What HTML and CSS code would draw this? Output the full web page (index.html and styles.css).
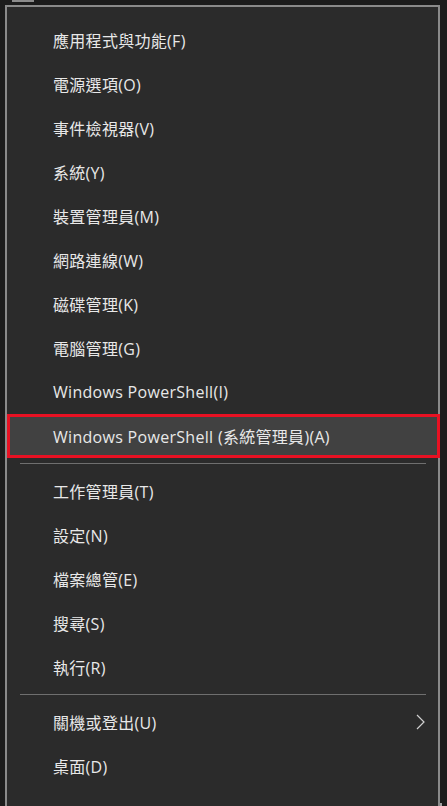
FILE: index.html
```html
<!DOCTYPE html>
<html lang="zh-Hant">
<head>
    <meta charset="UTF-8">
    <meta name="viewport" content="width=device-width, initial-scale=1.0">
    <title>Win+X</title>
    <link rel="stylesheet" href="styles.css">
</head>
<body>
    <div class="desk-bit bit-top"></div>
    <div class="desk-bit bit-blue"></div>
    <div class="desk-bit bit-grey"></div>
    <div class="desk-bit bit-logo"></div>
    <div class="desk-bit bit-right"></div>
    <div class="menu">
        <div class="item">應用程式與功能(F)</div>
        <div class="item">電源選項(O)</div>
        <div class="item">事件檢視器(V)</div>
        <div class="item">系統(Y)</div>
        <div class="item">裝置管理員(M)</div>
        <div class="item">網路連線(W)</div>
        <div class="item">磁碟管理(K)</div>
        <div class="item">電腦管理(G)</div>
        <div class="item">Windows PowerShell(I)</div>
        <div class="item selected">Windows PowerShell (系統管理員)(A)</div>
        <div class="sep"></div>
        <div class="item">工作管理員(T)</div>
        <div class="item">設定(N)</div>
        <div class="item">檔案總管(E)</div>
        <div class="item">搜尋(S)</div>
        <div class="item">執行(R)</div>
        <div class="sep"></div>
        <div class="item">關機或登出(U)
            <svg class="chevron" width="10" height="16" viewBox="0 0 10 16"><path d="M1 1 L8 8 L1 15" fill="none" stroke="#d0d0d0" stroke-width="1.2"/></svg>
        </div>
        <div class="item">桌面(D)</div>
    </div>
</body>
</html>
```

FILE: styles.css
```css
body {
    margin: 0;
    background: #1c1c1c;
    font-family: "Open Sans", "Noto Sans CJK TC", sans-serif;
    font-size: 16px;
    letter-spacing: 0.3px;
    color: #e8e8e8;
    height: 806px;
    overflow: hidden;
    position: relative;
}
.desk-bit {
    position: absolute;
    background: #8c8c8c;
}
.bit-top {
    left: 12px;
    top: 0;
    width: 22px;
    height: 2px;
}
.bit-blue {
    left: 20px;
    top: 803px;
    width: 13px;
    height: 3px;
    background: #1e78c8;
}
.bit-grey {
    left: 208px;
    top: 803px;
    width: 32px;
    height: 3px;
    background: #b0b0b0;
}
.bit-logo {
    left: 284px;
    top: 803px;
    width: 22px;
    height: 3px;
    background: linear-gradient(to right, #2a9de0 50%, #e0a800 50%);
}
.bit-right {
    left: 412px;
    top: 803px;
    width: 30px;
    height: 3px;
    background: #a0a0a0;
}
.menu {
    margin: 5px 0 0 5px;
    width: 431px;
    height: 793px;
    border: 2px solid #8a8a8a;
    background: #2b2b2b;
    padding-top: 11px;
    box-sizing: content-box;
    position: relative;
    z-index: 1;
}
.item {
    height: 44px;
    display: flex;
    align-items: center;
    padding-left: 46px;
    position: relative;
}
.item.selected {
    background: #414141;
    box-shadow: inset 0 0 0 3px #e81123;
    margin-right: -2px;
}
.sep {
    height: 1px;
    background: #6f6f6f;
    margin: 5px 12px 5px 13px;
}
.chevron {
    position: absolute;
    right: 12px;
    top: 14px;
}
```
